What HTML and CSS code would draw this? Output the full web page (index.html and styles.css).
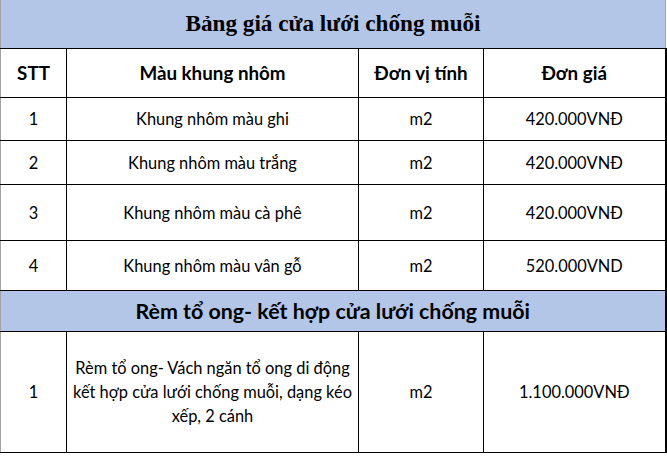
FILE: index.html
```html
<!DOCTYPE html>
<html lang="vi">
<head>
<meta charset="utf-8">
<title>Bảng giá cửa lưới chống muỗi</title>
<link rel="stylesheet" href="styles.css">
</head>
<body>
<table class="price">
  <colgroup>
    <col class="c1"><col class="c2"><col class="c3"><col class="c4">
  </colgroup>
  <tr class="r-title"><td colspan="4" class="title">Bảng giá cửa lưới chống muỗi</td></tr>
  <tr class="r-head">
    <th>STT</th><th>Màu khung nhôm</th><th>Đơn vị tính</th><th>Đơn giá</th>
  </tr>
  <tr class="r1"><td>1</td><td>Khung nhôm màu ghi</td><td>m2</td><td>420.000VNĐ</td></tr>
  <tr class="r2"><td>2</td><td>Khung nhôm màu trắng</td><td>m2</td><td>420.000VNĐ</td></tr>
  <tr class="r3"><td>3</td><td>Khung nhôm màu cà phê</td><td>m2</td><td>420.000VNĐ</td></tr>
  <tr class="r4"><td>4</td><td>Khung nhôm màu vân gỗ</td><td>m2</td><td>520.000VND</td></tr>
  <tr class="r-sec"><td colspan="4" class="section">Rèm tổ ong- kết hợp cửa lưới chống muỗi</td></tr>
  <tr class="r5"><td>1</td><td class="desc">Rèm tổ ong- Vách ngăn tổ ong di động kết hợp cửa lưới chống muỗi, dạng kéo xếp, 2 cánh</td><td>m2</td><td>1.100.000VNĐ</td></tr>
</table>
</body>
</html>
```

FILE: styles.css
```css
html, body {
  margin: 0;
  padding: 0;
  background: #ffffff;
}

.price {
  border-collapse: collapse;
  table-layout: fixed;
  width: 665px;
  font-family: Lato, "Noto Sans", sans-serif;
  color: #000000;
}

.c1 { width: 66px; }
.c2 { width: 292px; }
.c3 { width: 125px; }
.c4 { width: 182px; }

.price td, .price th {
  border: 1px solid #000000;
  text-align: center;
  vertical-align: middle;
  padding: 0;
  font-size: 16.4px;
  font-weight: 400;
}

.price tr > :first-child {
  border-left: 1px solid #a3a3a3;
}

.price tr > :last-child {
  border-right: 2px solid #000000;
}

.price th {
  font-weight: 700;
  font-size: 18.8px;
}

.price td.title {
  background: #b4c6e7;
  font-family: "Liberation Serif", "Times New Roman", serif;
  font-weight: 700;
  font-size: 23.2px;
  border-top: none;
  border-right: 1px solid #9aa8c0;
}

.price td.section {
  background: #b4c6e7;
  font-weight: 700;
  font-size: 21.4px;
}

.price td.desc {
  padding: 0 3px;
  line-height: 24px;
}

.r-title { height: 48px; }
.r-head { height: 49px; }
.r1 { height: 43px; }
.r2 { height: 44px; }
.r3 { height: 56px; }
.r4 { height: 50px; }
.r-sec { height: 41px; }
.r5 { height: 121px; }
```
